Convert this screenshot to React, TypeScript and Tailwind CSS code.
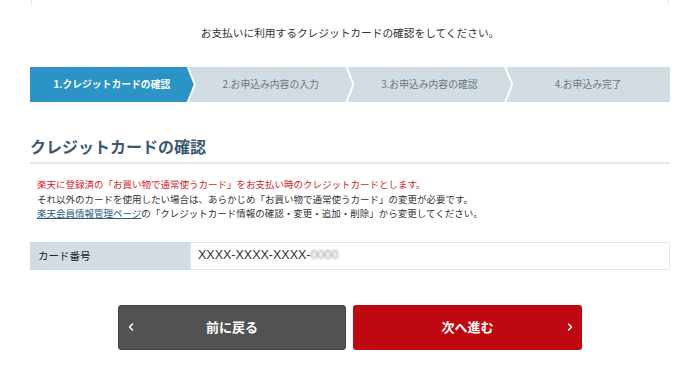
import { ChevronLeft, ChevronRight } from 'lucide-react';

const steps = [
    { label: '1.クレジットカードの確認', active: true },
    { label: '2.お申込み内容の入力', active: false },
    { label: '3.お申込み内容の確認', active: false },
    { label: '4.お申込み完了', active: false },
];

const jp = '[font-family:"Hiragino_Sans","Noto_Sans_CJK_JP",sans-serif]';

export default function App() {
    return (
        <div className={`w-[700px] h-[390px] bg-white overflow-hidden ${jp}`}>
            {/* leftover container edge */}
            <div className="mx-[31px] h-[6px] border-x border-[#e8ece4]" />

            <p className="mt-[20px] text-center text-[10.7px] leading-[14px] text-[#333]">
                お支払いに利用するクレジットカードの確認をしてください。
            </p>

            {/* Steps */}
            <div className="mx-[30px] mt-[27px] flex h-[35px]">
                {steps.map((s, i) => (
                    <div
                        key={i}
                        className={[
                            'flex flex-1 items-center justify-center text-[9.8px]',
                            i > 0 ? '-ml-[5px]' : '',
                            i === 0
                                ? '[clip-path:polygon(0_0,calc(100%_-_7px)_0,100%_50%,calc(100%_-_7px)_100%,0_100%)]'
                                : i === steps.length - 1
                                ? '[clip-path:polygon(0_0,100%_0,100%_100%,0_100%,7px_50%)]'
                                : '[clip-path:polygon(0_0,calc(100%_-_7px)_0,100%_50%,calc(100%_-_7px)_100%,0_100%,7px_50%)]',
                            s.active ? 'bg-[#2b93c5] font-bold text-white' : 'bg-[#d3dce2] text-[#6b7884]',
                        ].join(' ')}
                    >
                        {s.label}
                    </div>
                ))}
            </div>

            {/* Heading */}
            <div className="mx-[30px] mt-[34px] border-b-2 border-[#e2e9ed] pb-[6px]">
                <h2 className="text-[16px] font-bold leading-[20px] text-[#3d5870]">クレジットカードの確認</h2>
            </div>

            {/* Notes */}
            <div className="mx-[37px] mt-[13px] text-[9.5px] leading-[14.5px] text-[#333]">
                <p className="text-[#d0262c]">
                    楽天に登録済の「お買い物で通常使うカード」をお支払い時のクレジットカードとします。
                </p>
                <p>それ以外のカードを使用したい場合は、あらかじめ「お買い物で通常使うカード」の変更が必要です。</p>
                <p>
                    <span className="text-[#255a7a] underline">楽天会員情報管理ページ</span>
                    の「クレジットカード情報の確認・変更・追加・削除」から変更してください。
                </p>
            </div>

            {/* Card number row */}
            <div className="mx-[30px] mt-[21px] flex h-[28px]">
                <div className="flex w-[160px] items-center bg-[#d3dce2] pl-[8px] text-[10.5px] text-[#222]">
                    カード番号
                </div>
                <div className="flex flex-1 items-center border border-[#e0e7eb] bg-white pl-[7px] text-[12.5px] text-[#333] [font-family:'Liberation_Sans',sans-serif]">
                    XXXX-XXXX-XXXX-
                    <span className="text-[#999] blur-[1.2px]">0000</span>
                </div>
            </div>

            {/* Buttons */}
            <div className="mt-[35px] flex justify-center gap-[7px]">
                <button className="relative flex h-[45px] w-[228px] items-center justify-center rounded-[3px] border border-[#3f4447] bg-[#525252] text-[13px] font-bold text-white">
                    <ChevronLeft size={12} strokeWidth={3} className="absolute left-[6px]" />
                    前に戻る
                </button>
                <button className="relative flex h-[45px] w-[229px] items-center justify-center rounded-[3px] bg-[#bf0811] text-[13px] font-bold text-white">
                    次へ進む
                    <ChevronRight size={12} strokeWidth={3} className="absolute right-[6px]" />
                </button>
            </div>
        </div>
    );
}
